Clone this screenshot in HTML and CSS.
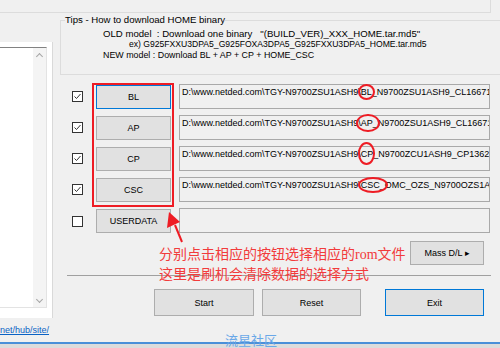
FILE: index.html
```html
<!DOCTYPE html>
<html lang="zh-CN">
<head>
  <meta charset="UTF-8" />
  <meta name="viewport" content="width=device-width, initial-scale=1.0"/>
  <link rel="stylesheet" href="styles.css">
</head>
<body>

  <!-- Edge of the box above -->
  <div class="top-box"></div>

  <div class="main">

    <!-- Log tab page (left) -->
    <div class="side">
      <div class="tab-page">
        <div class="log-box">
          <div class="scrollbar">
            <span class="chev up"></span>
            <span class="chev down"></span>
          </div>
        </div>
      </div>
      <span class="site-link">net/hub/site/</span>
    </div>

    <!-- File panel (right) -->
    <div class="panel">
      <fieldset class="tips">
        <legend>Tips - How to download HOME binary</legend>
        <div class="tip">OLD model  : Download one binary   "(BUILD_VER)_XXX_HOME.tar.md5"</div>
        <div class="tip ex">ex) G925FXXU3DPA5_G925FOXA3DPA5_G925FXXU3DPA5_HOME.tar.md5</div>
        <div class="tip new">NEW model : Download BL + AP + CP + HOME_CSC</div>
      </fieldset>

      <div class="files">
        <span class="check on"><svg viewBox="0 0 9 9"><path d="M1.5 4.5 L3.5 6.5 L7.5 2" /></svg></span>
        <button class="btn focus">BL</button>
        <div class="path"><div class="path-text">D:\www.netded.com\TGY-N9700ZSU1ASH9\<span class="mark m-bl">BL</span>_N9700ZSU1ASH9_CL16671475</div></div>

        <span class="check on"><svg viewBox="0 0 9 9"><path d="M1.5 4.5 L3.5 6.5 L7.5 2" /></svg></span>
        <button class="btn">AP</button>
        <div class="path"><div class="path-text">D:\www.netded.com\TGY-N9700ZSU1ASH9<span class="mark m-ap">\AP_</span>N9700ZSU1ASH9_CL16671475</div></div>

        <span class="check on"><svg viewBox="0 0 9 9"><path d="M1.5 4.5 L3.5 6.5 L7.5 2" /></svg></span>
        <button class="btn">CP</button>
        <div class="path"><div class="path-text">D:\www.netded.com\TGY-N9700ZSU1ASH9\<span class="mark m-cp">CP</span>_N9700ZCU1ASH9_CP13620 </div></div>

        <span class="check on"><svg viewBox="0 0 9 9"><path d="M1.5 4.5 L3.5 6.5 L7.5 2" /></svg></span>
        <button class="btn">CSC</button>
        <div class="path"><div class="path-text">D:\www.netded.com\TGY-N9700ZSU1ASH9\<span class="mark m-csc">CSC_</span>OMC_OZS_N9700OZS1ASH9</div></div>

        <span class="check user"></span>
        <button class="btn">USERDATA</button>
        <div class="path"></div>
      </div>

      <div class="mass-row">
        <button class="btn mass">Mass D/L &#9656;</button>
      </div>

      <div class="sep"></div>

      <div class="actions">
        <button class="btn act start">Start</button>
        <button class="btn act reset">Reset</button>
        <button class="btn act exit focus">Exit</button>
      </div>
    </div>
  </div>

  <div class="status"></div>

  <!-- Annotations drawn over the window -->
  <div class="red-box"></div>
  <svg class="arrow" viewBox="0 0 30 45" width="30" height="45">
    <path d="M21 37 L14 20" />
    <polygon points="8,7 6,23 19,17" />
  </svg>
  <div class="note">分别点击相应的按钮选择相应的<span class="latin">rom</span>文件<br>这里是刷机会清除数据的选择方式</div>
  <div class="watermark">流星社区</div>

</body>
</html>
```

FILE: styles.css
```css
* {
  box-sizing: border-box;
}

html, body {
  margin: 0;
  padding: 0;
}

body {
  width: 500px;
  height: 348px;
  overflow: hidden;
  position: relative;
  background-color: #f0f0f0;
  font-family: "Liberation Sans", Arial, sans-serif;
  font-size: 9px;
  color: #000;
}

.top-box {
  width: 491px;
  height: 13px;
  border-right: 1px solid #dcdcdc;
  border-bottom: 1px solid #dcdcdc;
}

.main {
  display: flex;
  height: 329px;
}

/* left log pane */
.side {
  width: 53px;
  flex: none;
  display: flex;
  flex-direction: column;
}

.tab-page {
  margin-top: 29px;
  height: 276px;
  background: #fff;
  border-right: 1px solid #d9d9d9;
}

.log-box {
  margin-top: 5px;
  width: 47px;
  height: 261px;
  border-top: 1px solid #828282;
  border-right: 1px solid #e3e3e3;
  border-bottom: 1px solid #e3e3e3;
  display: flex;
  justify-content: flex-end;
}

.scrollbar {
  width: 13px;
  background: #f4f4f4;
  display: flex;
  flex-direction: column;
  justify-content: space-between;
  align-items: center;
  padding: 6px 0 5px;
}

.chev {
  width: 5px;
  height: 5px;
  border-left: 1px solid #a6a6a6;
  border-top: 1px solid #a6a6a6;
}

.chev.up {
  transform: rotate(45deg);
}

.chev.down {
  transform: rotate(-135deg);
}

.site-link {
  margin-top: 7px;
  line-height: 11px;
  color: #0b62c4;
  text-decoration: underline;
  white-space: nowrap;
}

/* right panel */
.panel {
  margin-left: 7px;
  width: 440px;
  flex: none;
  min-width: 0;
  display: flex;
  flex-direction: column;
}

.tips {
  margin: 1px 0 0;
  width: 470px;
  min-width: 0;
  border: 1px solid #dcdcdc;
  padding: 2px 4px 13px;
}

.tips legend {
  padding: 0;
  font-size: 9.6px;
  line-height: 12px;
}

.tip {
  font-size: 9.6px;
  line-height: 11px;
  padding-left: 38px;
  white-space: pre;
}

.tip.ex {
  font-size: 8.6px;
  padding-left: 64px;
}

.tip.new {
  font-size: 8.9px;
}

.files {
  margin-top: 9px;
  padding-left: 12px;
  display: grid;
  grid-template-columns: 24px 83px 311px;
  grid-auto-rows: 25px;
  row-gap: 6px;
}

.check {
  width: 11px;
  height: 11px;
  align-self: center;
  border: 1px solid #333;
  background: #fff;
  display: flex;
}

.check svg {
  width: 9px;
  height: 9px;
  fill: none;
  stroke: #333;
  stroke-width: 1;
}

.check.user {
  margin-top: 2px;
}

.btn {
  font-family: inherit;
  font-size: 9px;
  color: #000;
  background: #e1e1e1;
  border: 1px solid #adadad;
  padding: 0;
  margin: 0;
}

.files .btn {
  width: 75px;
  height: 24px;
  align-self: center;
}

.btn.focus {
  border-color: #0078d7;
}

.path {
  height: 25px;
  border: 1px solid #a9a9a9;
  background: #f0f0f0;
  padding: 2px 0 0 2px;
}

.path-text {
  line-height: 11px;
  white-space: nowrap;
  clip-path: inset(-8px 0 -8px -8px);
}

.mark {
  position: relative;
}

.mark::after {
  content: "";
  position: absolute;
  border: 2px solid #ee1c24;
  border-radius: 50%;
}

.m-bl::after {
  left: -3px;
  right: -3px;
  top: -3px;
  bottom: -3px;
}

.m-ap::after {
  left: -2px;
  right: -2px;
  top: -4px;
  bottom: -4px;
}

.m-cp::after {
  left: -3px;
  right: -2px;
  top: -7px;
  bottom: -6px;
}

.m-csc::after {
  left: -3px;
  right: -3px;
  top: -3px;
  bottom: -3px;
}

.mass-row {
  margin-top: 8px;
  padding-right: 16px;
  display: flex;
  justify-content: flex-end;
}

.btn.mass {
  width: 74px;
  height: 24px;
}

.sep {
  margin: 10px 0 0 7px;
  width: 424px;
  border-top: 1px solid #a0a0a0;
}

.actions {
  margin-top: 13px;
  padding-right: 16px;
  display: flex;
  justify-content: flex-end;
  gap: 8px;
}

.btn.act {
  width: 99px;
  height: 27px;
}

.btn.start {
  width: 100px;
}

.btn.exit {
  margin-left: 16px;
}

.status {
  height: 6px;
  border-top: 2px solid #4a8fd8;
  background: #dcdcdc;
}

/* annotations */
.red-box {
  position: absolute;
  left: 92px;
  top: 83px;
  width: 82px;
  height: 124px;
  border: 2px solid #ee1c24;
}

.arrow {
  position: absolute;
  left: 161px;
  top: 205px;
}

.arrow path {
  stroke: #ee1c24;
  stroke-width: 2;
  fill: none;
}

.arrow polygon {
  fill: #ee1c24;
}

.note {
  position: absolute;
  left: 159px;
  top: 244px;
  font-family: "Noto Sans CJK SC", sans-serif;
  font-size: 14px;
  line-height: 18px;
  color: #f23b3b;
  white-space: nowrap;
}

.note .latin {
  font-family: "Liberation Serif", serif;
}

.watermark {
  position: absolute;
  left: 225px;
  top: 332px;
  font-family: "Noto Sans CJK SC", sans-serif;
  font-size: 13px;
  line-height: 16px;
  color: #6aa8e8;
}
```
